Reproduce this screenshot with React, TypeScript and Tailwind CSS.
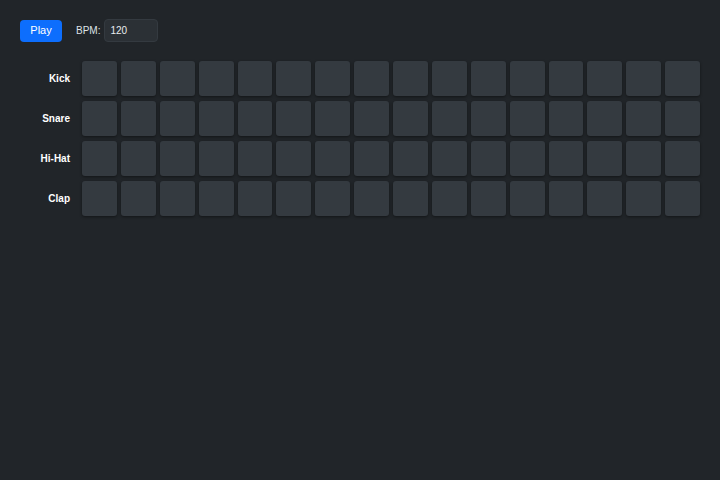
import React from "react";

const tracks = ["Kick", "Snare", "Hi-Hat", "Clap"];
const steps = Array.from({ length: 16 }, (_, i) => i);

export default function App() {
  return (
    <div className="min-h-screen w-full bg-[#212529] px-5 py-[19px] text-white [font-family:'Liberation_Sans',Arial,sans-serif]">
      <div className="flex items-center h-[23px]">
        <button className="h-[22px] w-[42px] rounded-[4px] bg-[#0d6efd] text-[11px] text-white leading-none">
          Play
        </button>
        <span className="ml-[14px] text-[10px] text-[#dee2e6]">BPM:</span>
        <input
          className="ml-[4px] h-[23px] w-[54px] rounded-[4px] border border-[#343a40] bg-[#2b3035] px-[5px] text-[10px] text-[#e9ecef] outline-none"
          defaultValue="120"
        />
      </div>
      <div className="mt-[19px] flex flex-col gap-[5px]">
        {tracks.map((t) => (
          <div key={t} className="flex items-center gap-[12px]">
            <div className="w-[50px] text-right text-[10px] font-bold text-white">{t}</div>
            <div className="flex flex-1 gap-[4px]">
              {steps.map((s) => (
                <div
                  key={s}
                  className="h-[35px] flex-1 rounded-[3px] bg-[#343a40] shadow-[0_1px_3px_rgba(0,0,0,0.45)]"
                />
              ))}
            </div>
          </div>
        ))}
      </div>
    </div>
  );
}
